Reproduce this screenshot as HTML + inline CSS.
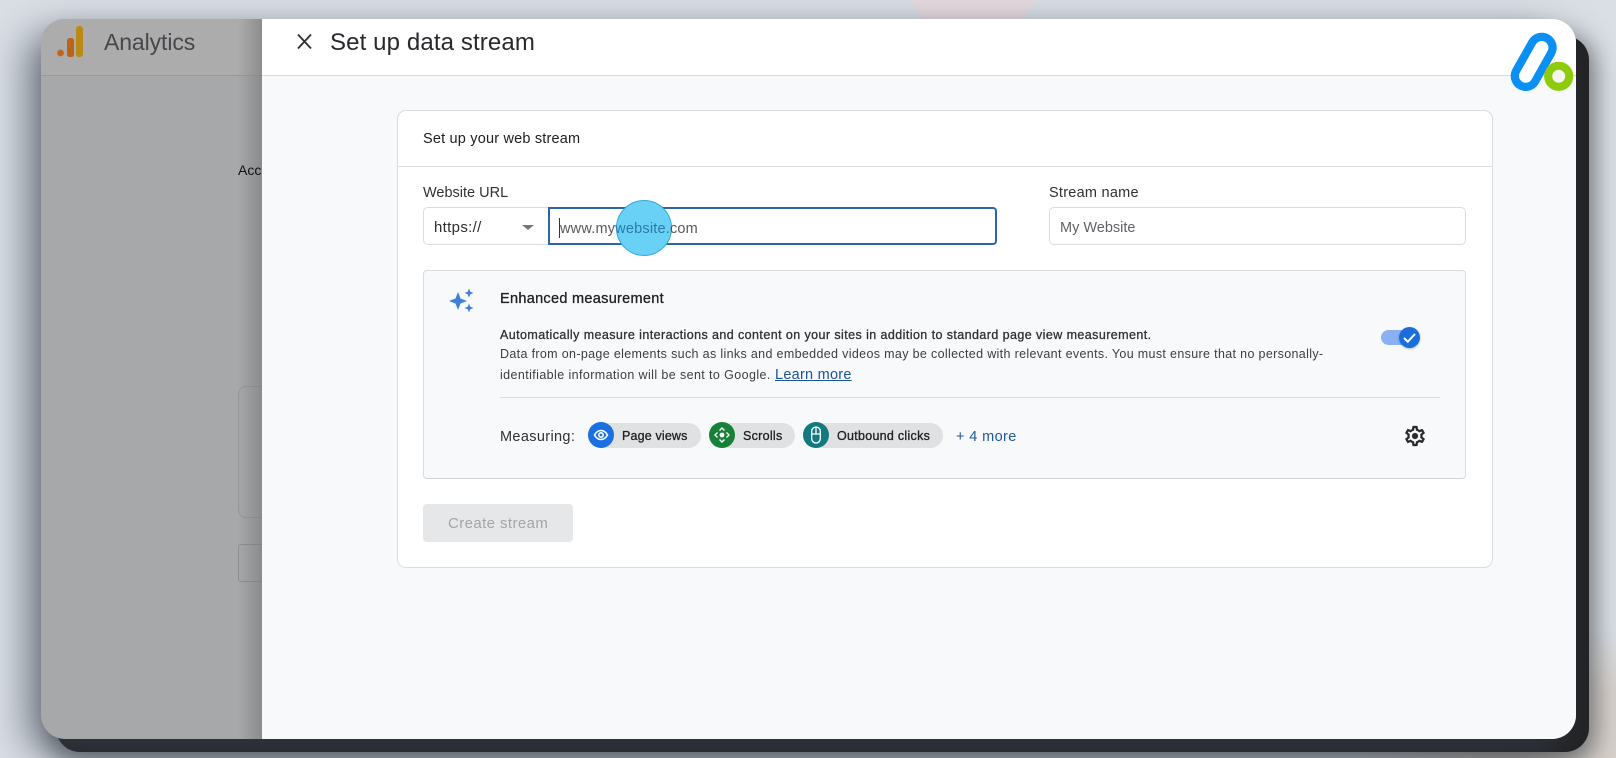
<!DOCTYPE html>
<html lang="en">
<head>
<meta charset="utf-8">
<title>Set up data stream</title>
<style>
html,body{margin:0;padding:0}
body{width:1616px;height:758px;position:relative;overflow:hidden;background:#dadfe6;font-family:"Liberation Sans",Arial,sans-serif}
.a{position:absolute}
.t{position:absolute;white-space:nowrap;height:20px;line-height:20px;color:#202124}
.m{-webkit-text-stroke:.3px currentColor}
.chip{position:absolute;top:423px;height:25px;border-radius:13px;background:#e0e1e2}
.ci{position:absolute;top:422px;width:26px;height:26px;border-radius:50%}
</style>
</head>
<body>
<div class="a" style="left:0;top:0;width:1616px;height:758px;background:radial-gradient(260px 130px at 1616px 758px,#d6cfca 0,#d6cfca 50%,rgba(214,207,202,0) 100%)"></div>
<div class="a" style="left:905px;top:-50px;width:136px;height:90px;border-radius:0 0 70px 70px;background:#e6dbe0"></div>
<div class="a" style="left:56px;top:36px;width:1533px;height:716px;border-radius:24px;background:#212224;box-shadow:0 6px 24px 6px rgba(40,45,50,.55)"></div>
<div class="a" style="left:41px;top:19px;width:1535px;height:720px;border-radius:24px;overflow:hidden;background:#a7a8aa;box-shadow:-14px 14px 40px rgba(60,68,78,.65)">
  <div class="a" style="left:0;top:0;width:221px;height:56px;background:#acacac;border-bottom:1px solid #98989a"></div>
  <div class="a" style="left:197px;top:367px;width:40px;height:130px;border:1px solid #959698;border-radius:8px"></div>
  <div class="a" style="left:197px;top:525px;width:40px;height:36px;border:1px solid #8e8f91;border-radius:3px"></div>
  <div class="a" style="left:197px;top:0;width:24px;height:720px;background:linear-gradient(90deg,rgba(120,120,122,0),rgba(120,120,122,.6))"></div>
  <div class="a" style="left:221px;top:0;width:1314px;height:720px;background:#f8f9fb"></div>
  <div class="a" style="left:221px;top:0;width:1314px;height:56px;background:#fff;border-bottom:1px solid #d6d8da"></div>
</div>

<svg class="a" style="left:56px;top:24px" width="32" height="36" viewBox="0 0 32 36">
  <circle cx="4.500" cy="29" r="3.400" fill="#c0661f"/>
  <rect x="11" y="14" width="7" height="19" rx="2.600" fill="#bb6417"/>
  <rect x="20" y="2" width="7" height="31" rx="3" fill="#bb8918"/>
</svg>
<div class="t" style="left:104px;top:32px;font-size:23px;color:#45474a;letter-spacing:-.1px">Analytics</div>
<div class="t" style="left:238px;top:160px;font-size:14px;color:#111;width:24px;overflow:hidden">Account</div>

<svg class="a" style="left:296px;top:32px" width="17" height="19" viewBox="0 0 17 19"><path d="M2 2.500 15 16.500M15 2.500 2 16.500" stroke="#303134" stroke-width="1.900" fill="none"/></svg>
<div class="t" style="left:330px;top:33px;font-size:24px;color:#28292c;letter-spacing:.12px">Set up data stream</div>

<svg class="a" style="left:1505px;top:28px" width="72" height="66" viewBox="0 0 72 66">
  <path d="M36.700 19.700 20.700 48" stroke="#0a90f5" stroke-width="30" stroke-linecap="round" fill="none"/>
  <path d="M36.700 19.700 20.700 48" stroke="#fff" stroke-width="13.500" stroke-linecap="round" fill="none"/>
  <circle cx="53.700" cy="48.300" r="14.600" fill="#8ecb0a"/>
  <circle cx="53.700" cy="48.300" r="6.500" fill="#f4f6ee"/>
</svg>

<div class="a" style="left:397px;top:110px;width:1094px;height:456px;background:#fff;border:1px solid #dadce0;border-radius:9px"></div>
<div class="a" style="left:398px;top:166px;width:1094px;height:1px;background:#dadce0"></div>
<div class="t" style="left:423px;top:129px;font-size:14.5px;letter-spacing:.19px">Set up your web stream</div>
<div class="t" style="left:423px;top:183px;font-size:14.5px;color:#303134">Website URL</div>
<div class="t" style="left:1049px;top:183px;font-size:14.5px;color:#303134;letter-spacing:.25px">Stream name</div>

<div class="a" style="left:423px;top:207px;width:130px;height:36px;border:1px solid #dadce0;border-radius:5px 0 0 5px;background:#fff"></div>
<div class="t" style="left:434px;top:218px;font-size:15px;color:#2c2d30;letter-spacing:.33px">https://</div>
<div class="a" style="left:522px;top:225px;width:0;height:0;border-left:6px solid transparent;border-right:6px solid transparent;border-top:5px solid #76787c"></div>
<div class="a" style="left:548px;top:207px;width:445px;height:34px;border:2px solid #2d65ac;border-radius:0 4px 4px 0;background:#fff"></div>

<div class="a" style="left:616px;top:200px;width:54px;height:54px;border:1px solid #2fa9d8;border-radius:50%;background:#6ad1f6"></div>
<div class="t" style="left:560px;top:219px;font-size:14.5px;color:#55585c;letter-spacing:.2px">www.my<span style="color:#2a7aa8">website.</span>com</div>
<div class="a" style="left:559px;top:218px;width:1px;height:20px;background:#333"></div>

<div class="a" style="left:1049px;top:207px;width:415px;height:36px;border:1px solid #dadce0;border-radius:5px;background:#fff"></div>
<div class="t" style="left:1060px;top:218px;font-size:14.5px;color:#5f6368">My Website</div>

<div class="a" style="left:423px;top:270px;width:1041px;height:207px;background:#f8f9fb;border:1px solid #d9dbde;border-bottom-color:#d0d2d5;border-radius:4px"></div>

<svg class="a" style="left:448px;top:286px" width="28" height="30" viewBox="0 0 28 30" fill="#3f7fdc">
  <path d="M10 6 12.500 12.500 19 15 12.500 17.500 10 24 7.500 17.500 1 15 7.500 12.500Z"/>
  <path d="M21 2.500 22.300 5.700 25.500 7 22.300 8.300 21 11.500 19.700 8.300 16.500 7 19.700 5.700Z"/>
  <path d="M21 17.500 22.300 20.700 25.500 22 22.300 23.300 21 26.500 19.700 23.300 16.500 22 19.700 20.700Z"/>
</svg>

<div class="t m" style="left:500px;top:289px;font-size:14.5px;color:#202124;letter-spacing:.3px">Enhanced measurement</div>
<div class="t m" style="left:500px;top:325px;font-size:12.5px;color:#303134;letter-spacing:.42px">Automatically measure interactions and content on your sites in addition to standard page view measurement.</div>
<div class="t" style="left:500px;top:344px;font-size:12.5px;color:#3c4043;letter-spacing:.34px">Data from on-page elements such as links and embedded videos may be collected with relevant events. You must ensure that no personally-</div>
<div class="t" style="left:500px;top:365px;font-size:12.5px;color:#3c4043;letter-spacing:.4px">identifiable information will be sent to Google.</div>
<div class="t" style="left:775px;top:365px;font-size:14.5px;color:#1c5494;text-decoration:underline;letter-spacing:.25px">Learn more</div>

<div class="a" style="left:1381px;top:330px;width:30px;height:15px;border-radius:8px;background:#8ab1f3"></div>
<div class="a" style="left:1399px;top:327px;width:21px;height:21px;border-radius:50%;background:#1c6ddc;box-shadow:0 1px 2px rgba(0,0,0,.25)"></div>
<svg class="a" style="left:1399px;top:327px" width="21" height="21" viewBox="0 0 21 21"><path d="M5 11 8.800 14.700 16 7" stroke="#fff" stroke-width="2" fill="none"/></svg>

<div class="a" style="left:500px;top:397px;width:940px;height:1px;background:#dadce0"></div>

<div class="t" style="left:500px;top:427px;font-size:14.5px;color:#303134;letter-spacing:.35px">Measuring:</div>

<div class="chip" style="left:588px;width:113px"></div>
<div class="ci" style="left:588px;background:#1a70e0"></div>
<svg class="a" style="left:588px;top:422px" width="26" height="26" viewBox="0 0 26 26" fill="none" stroke="#fff" stroke-width="1.600"><path d="M6.500 13C8.300 9.800 10.500 8.500 13 8.500s4.700 1.300 6.500 4.500C17.700 16.200 15.500 17.500 13 17.500s-4.700-1.300-6.500-4.500Z"/><circle cx="13" cy="13" r="2.200"/></svg>
<div class="t m" style="left:622px;top:426px;font-size:12.5px;color:#202124;letter-spacing:.16px">Page views</div>

<div class="chip" style="left:709px;width:86px"></div>
<div class="ci" style="left:709px;background:#188038"></div>
<svg class="a" style="left:709px;top:422px" width="26" height="26" viewBox="0 0 26 26" fill="none" stroke="#fff" stroke-width="1.400"><circle cx="13" cy="13" r="2.400" fill="#fff" stroke="none"/><path d="M10.500 8.500 13 6 15.500 8.500M10.500 17.500 13 20 15.500 17.500M8.500 10.500 6 13 8.500 15.500M17.500 10.500 20 13 17.500 15.500"/></svg>
<div class="t m" style="left:743px;top:426px;font-size:12.5px;color:#202124;letter-spacing:.29px">Scrolls</div>

<div class="chip" style="left:803px;width:140px"></div>
<div class="ci" style="left:803px;background:#12797e"></div>
<svg class="a" style="left:803px;top:422px" width="26" height="26" viewBox="0 0 26 26" fill="none" stroke="#fff" stroke-width="1.300"><rect x="8.700" y="5" width="8.600" height="16" rx="4.300"/><path d="M8.700 12H17.300M13 5V12"/></svg>
<div class="t m" style="left:837px;top:426px;font-size:12.5px;color:#202124;letter-spacing:.28px">Outbound clicks</div>

<div class="t" style="left:956px;top:427px;font-size:14.5px;color:#20589e;letter-spacing:.38px">+ 4 more</div>

<svg class="a" style="left:1403px;top:424px" width="24" height="24" viewBox="0 0 24 24" fill="#2a2b2e" stroke="#2a2b2e" stroke-width=".3">
  <path d="M19.430 12.980c.04-.32.07-.64.07-.98 0-.34-.03-.66-.07-.98l2.110-1.650c.19-.15.24-.42.12-.64l-2-3.460c-.09-.16-.26-.25-.44-.25-.06 0-.12.01-.17.03l-2.490 1c-.52-.4-1.080-.73-1.690-.98l-.38-2.650C14.460 2.180 14.250 2 14 2h-4c-.25 0-.46.18-.49.42l-.38 2.650c-.61.25-1.170.59-1.690.98l-2.490-1c-.06-.02-.12-.03-.18-.03-.17 0-.34.09-.43.25l-2 3.460c-.13.22-.07.49.12.64l2.110 1.650c-.04.32-.07.65-.07.98 0 .33.03.66.07.98l-2.110 1.650c-.19.15-.24.42-.12.64l2 3.460c.09.16.26.25.44.25.06 0 .12-.01.17-.03l2.490-1c.52.4 1.080.73 1.690.98l.38 2.650c.03.24.24.42.49.42h4c.25 0 .46-.18.49-.42l.38-2.650c.61-.25 1.170-.59 1.690-.98l2.490 1c.06.02.12.03.18.03.17 0 .34-.09.43-.25l2-3.460c.12-.22.07-.49-.12-.64l-2.110-1.650zm-1.980-1.710c.04.31.05.52.05.73 0 .21-.02.43-.05.73l-.14 1.130.89.7 1.080.84-.7 1.210-1.270-.51-1.040-.42-.9.68c-.43.32-.84.56-1.250.73l-1.060.43-.16 1.130-.2 1.350h-1.400l-.19-1.350-.16-1.130-1.060-.43c-.43-.18-.83-.41-1.230-.71l-.91-.7-1.060.43-1.270.51-.7-1.210 1.080-.84.89-.7-.14-1.130c-.03-.31-.05-.54-.05-.74s.02-.43.05-.73l.14-1.130-.89-.7-1.080-.84.7-1.210 1.270.51 1.040.42.9-.68c.43-.32.84-.56 1.250-.73l1.060-.43.16-1.130.2-1.350h1.390l.19 1.350.16 1.130 1.060.43c.43.18.83.41 1.230.71l.91.7 1.060-.43 1.270-.51.7 1.210-1.070.85-.89.7.14 1.130z"/>
  <circle cx="12" cy="12" r="3"/>
</svg>

<div class="a" style="left:423px;top:504px;width:150px;height:38px;border-radius:4px;background:#e6e7e8"></div>
<div class="t" style="left:448px;top:514px;font-size:15px;color:#a3a5a8;letter-spacing:.4px">Create stream</div>
</body>
</html>
